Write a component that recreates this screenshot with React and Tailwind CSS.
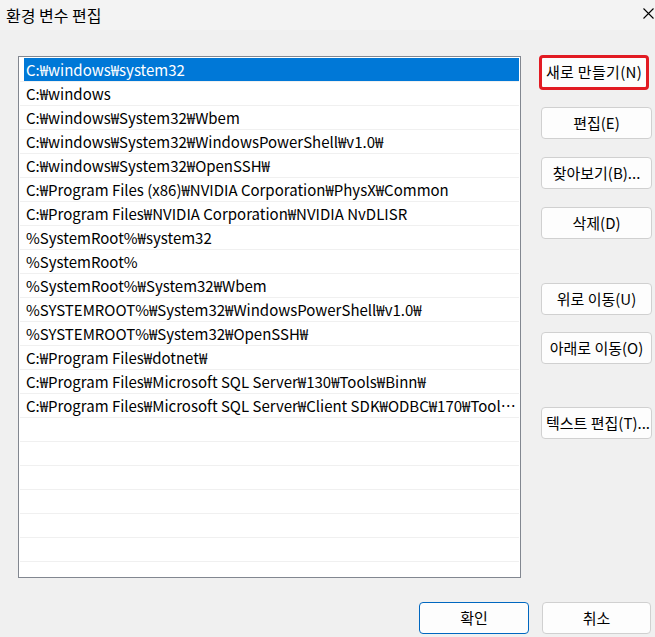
import React from "react"

const paths = [
    "C:₩windows₩system32",
    "C:₩windows",
    "C:₩windows₩System32₩Wbem",
    "C:₩windows₩System32₩WindowsPowerShell₩v1.0₩",
    "C:₩windows₩System32₩OpenSSH₩",
    "C:₩Program Files (x86)₩NVIDIA Corporation₩PhysX₩Common",
    "C:₩Program Files₩NVIDIA Corporation₩NVIDIA NvDLISR",
    "%SystemRoot%₩system32",
    "%SystemRoot%",
    "%SystemRoot%₩System32₩Wbem",
    "%SYSTEMROOT%₩System32₩WindowsPowerShell₩v1.0₩",
    "%SYSTEMROOT%₩System32₩OpenSSH₩",
    "C:₩Program Files₩dotnet₩",
    "C:₩Program Files₩Microsoft SQL Server₩130₩Tools₩Binn₩",
    "C:₩Program Files₩Microsoft SQL Server₩Client SDK₩ODBC₩170₩Tools₩Binn₩",
]

const font = { fontFamily: '"Noto Sans CJK KR", "Noto Sans", sans-serif' }

const Btn = ({ children, className = "" }) => (
    <button className={"h-[32px] w-[111px] rounded-[4px] border border-[#d0d0d0] bg-[#fdfdfd] text-[15px] text-black text-center whitespace-nowrap overflow-hidden " + className}>
        {children}
    </button>
)

const PathRow = ({ text, selected }) => (
    <div className="h-[24px] border-b border-[#f0f0f0] shrink-0">
        {selected ? (
            <div className="ml-[4px] h-[23px] bg-[#0078d7] text-white pl-[2px] leading-[23px] truncate">{text}</div>
        ) : (
            <div className="pl-[6px] pr-[2px] leading-[23px] text-black truncate">{text}</div>
        )}
    </div>
)

export default function App() {
    const rows = [...paths, ...Array(7).fill("")]
    return (
        <div className="w-[655px] h-[637px] bg-[#f0f0f0] flex flex-col overflow-hidden select-none" style={font}>
            <div className="h-[30px] bg-[#f3f3f3] flex items-center justify-between pl-[6px] pr-[1px] shrink-0">
                <span className="text-[16px] text-black">환경 변수 편집</span>
                <svg width="11" height="11" viewBox="0 0 11 11" className="mt-[-3px]">
                    <path d="M0.5 0.5 L10.5 10.5 M10.5 0.5 L0.5 10.5" stroke="#000" strokeWidth="1.1" />
                </svg>
            </div>

            <div className="flex flex-row mt-[26px] pl-[18px] gap-[20px]">
                <div className="w-[503px] h-[522px] border border-[#828790] bg-white p-[1px] flex flex-col overflow-hidden text-[15px]">
                    {rows.map((p, i) => (
                        <PathRow key={i} text={p} selected={i === 0} />
                    ))}
                </div>

                <div className="flex flex-col">
                    <div className="-mt-[1px] -ml-[2px] h-[35px] w-[110px] rounded-[4px] border-[3px] border-[#e21b23] bg-[#fdfdfd] text-[15px] tracking-[0.3px] flex items-center justify-center whitespace-nowrap overflow-hidden">
                        새로 만들기(N)
                    </div>
                    <Btn className="mt-[17px]">편집(E)</Btn>
                    <Btn className="mt-[18px]">찾아보기(B)...</Btn>
                    <Btn className="mt-[18px]">삭제(D)</Btn>
                    <Btn className="mt-[44px]">위로 이동(U)</Btn>
                    <Btn className="mt-[17px]">아래로 이동(O)</Btn>
                    <Btn className="mt-[43px] !text-left pl-[4px]">텍스트 편집(T)...</Btn>
                </div>
            </div>

            <div className="flex flex-row justify-end gap-[13px] pr-[4px] mt-[24px]">
                <button className="h-[32px] w-[110px] rounded-[4px] border border-[#0067c0] bg-[#fdfdfd] text-[15px] text-black">확인</button>
                <button className="h-[32px] w-[109px] rounded-[4px] border border-[#d0d0d0] bg-[#fdfdfd] text-[15px] text-black">취소</button>
            </div>
        </div>
    )
}
